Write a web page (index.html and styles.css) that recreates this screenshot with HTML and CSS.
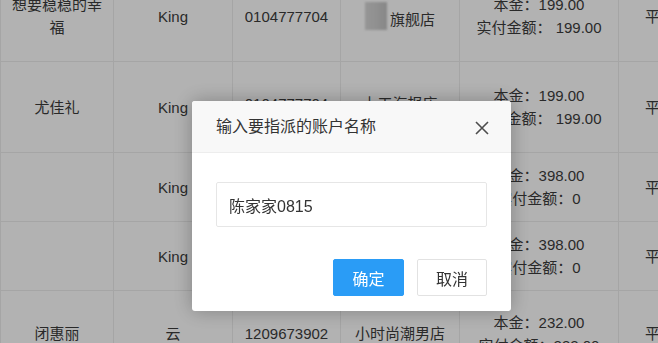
FILE: index.html
```html
<!DOCTYPE html>
<html lang="zh-CN">
<head>
<meta charset="utf-8">
<title>指派账户</title>
<link rel="stylesheet" href="styles.css">
</head>
<body>
<div class="page">
  <table class="orders">
    <colgroup>
      <col class="c1"><col class="c2"><col class="c3"><col class="c4"><col class="c5"><col class="c6">
    </colgroup>
    <tbody>
      <tr class="tall">
        <td>想要稳稳的幸福</td>
        <td>King</td>
        <td>0104777704</td>
        <td><span class="blur"></span>旗舰店</td>
        <td>本金：199.00<br>实付金额： 199.00</td>
        <td class="last">平台</td>
      </tr>
      <tr class="tall">
        <td>尤佳礼</td>
        <td>King</td>
        <td class="up">0104777704</td>
        <td class="up">上工海报店</td>
        <td>本金：199.00<br>实付金额： 199.00</td>
        <td class="last">平台</td>
      </tr>
      <tr class="short">
        <td></td>
        <td>King</td>
        <td></td>
        <td></td>
        <td>本金：398.00<br>实付金额：0</td>
        <td class="last">平台</td>
      </tr>
      <tr class="short">
        <td></td>
        <td>King</td>
        <td></td>
        <td></td>
        <td>本金：398.00<br>实付金额：0</td>
        <td class="last">平台</td>
      </tr>
      <tr class="end">
        <td>闭惠丽</td>
        <td>云</td>
        <td>1209673902</td>
        <td>小时尚潮男店</td>
        <td>本金：232.00<br>实付金额：232.00</td>
        <td class="last">平台</td>
      </tr>
    </tbody>
  </table>
</div>

<div class="shade"></div>

<div class="dialog">
  <div class="dialog-head">
    <span class="dialog-title">输入要指派的账户名称</span>
    <svg class="close" width="14" height="14" viewBox="0 0 14 14">
      <path d="M1 1 L13 13 M13 1 L1 13" stroke="#4d4d4d" stroke-width="1.6" fill="none"/>
    </svg>
  </div>
  <div class="dialog-body">
    <div class="field">陈家家0815</div>
    <div class="actions">
      <button class="btn btn-primary">确定</button>
      <button class="btn btn-default">取消</button>
    </div>
  </div>
</div>
</body>
</html>
```

FILE: styles.css
```css
html, body {
  margin: 0;
  padding: 0;
  width: 658px;
  height: 343px;
  overflow: hidden;
  background: #fff;
  font-family: "Liberation Sans", "Noto Sans CJK SC", sans-serif;
}

.page {
  margin-top: -30px;
}

.orders {
  border-collapse: collapse;
  table-layout: fixed;
  width: 760px;
  font-size: 15px;
  line-height: 23px;
  color: #3c3c3c;
}

.c1 { width: 113px; }
.c2 { width: 119px; }
.c3 { width: 108px; }
.c4 { width: 119px; }
.c5 { width: 159px; }
.c6 { width: 142px; }

.orders td {
  border: 1px solid #ececec;
  text-align: center;
  vertical-align: middle;
  padding: 0 8px;
  white-space: normal;
}

.orders tr.tall { height: 91px; }
.orders tr.short { height: 69px; }
.orders tr.end { height: 86px; }

.orders td.up { padding-bottom: 8px; }

.orders td.last {
  text-align: left;
  padding-left: 26px;
}

.blur {
  display: inline-block;
  width: 22px;
  height: 28px;
  margin-right: 3px;
  vertical-align: -5px;
  background: linear-gradient(90deg, #d6d6d6 0%, #d0d0d0 45%, #c2c2c2 100%);
  filter: blur(1.2px);
}

.shade {
  position: fixed;
  inset: 0;
  background: rgba(0, 0, 0, 0.3);
}

.dialog {
  position: fixed;
  left: 192px;
  top: 101px;
  width: 319px;
  background: #fff;
  border-radius: 3px;
  box-shadow: 0 0 20px rgba(0, 0, 0, 0.28);
  overflow: hidden;
}

.dialog-head {
  height: 51px;
  border-bottom: 1px solid #ededed;
  background: #f8f8f8;
  display: flex;
  align-items: center;
  justify-content: space-between;
  padding: 0 22px 0 24px;
}

.dialog-title {
  font-size: 16px;
  color: #333;
  line-height: 20px;
}

.close {
  display: block;
  margin-top: 3px;
}

.dialog-body {
  padding: 29px 24px 15px;
}

.field {
  height: 43px;
  border: 1px solid #e6e6e6;
  border-radius: 2px;
  padding: 0 12px;
  display: flex;
  align-items: center;
  font-size: 16px;
  color: #333;
}

.actions {
  display: flex;
  justify-content: flex-end;
  gap: 13px;
  margin-top: 32px;
}

.btn {
  height: 37px;
  border-radius: 2px;
  font-size: 16px;
  font-family: "Liberation Sans", "Noto Sans CJK SC", sans-serif;
  padding: 0;
  cursor: pointer;
}

.btn-primary {
  width: 71px;
  background: #2a9cf6;
  border: 1px solid #2a9cf6;
  color: #fff;
}

.btn-default {
  width: 70px;
  background: #fff;
  border: 1px solid #e2e2e2;
  color: #333;
}
```
